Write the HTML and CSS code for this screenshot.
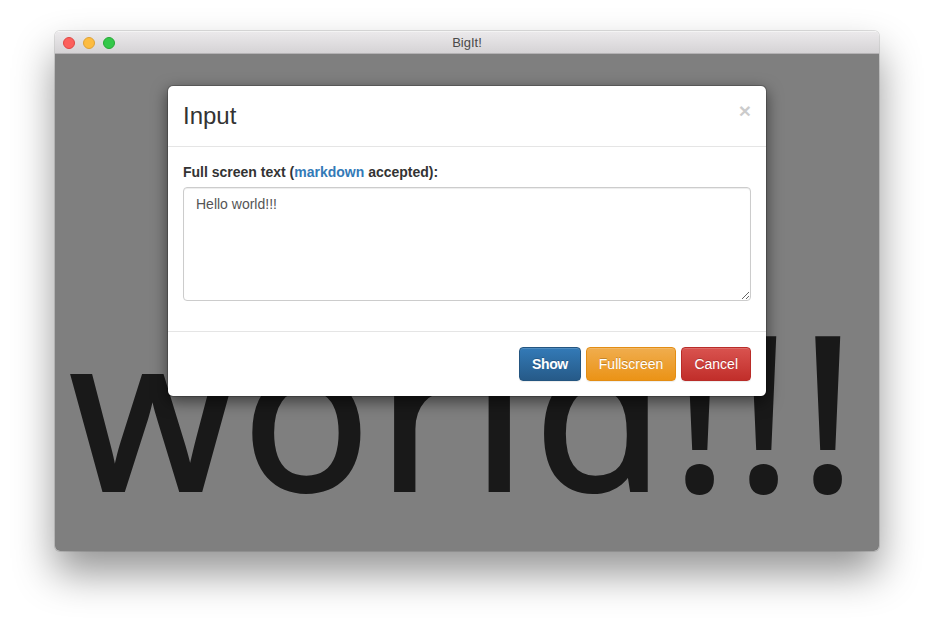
FILE: index.html
```html
<!DOCTYPE html>
<html>
<head>
<meta charset="utf-8">
<title>BigIt!</title>
<link rel="stylesheet" href="styles.css">
</head>
<body>
<div class="window">
  <div class="titlebar">
    <div class="lights">
      <span class="light red"></span>
      <span class="light yellow"></span>
      <span class="light green"></span>
    </div>
    <div class="title">BigIt!</div>
  </div>
  <div class="content">
    <div class="page">
      <div class="big">Hello world!!!</div>
    </div>
    <div class="backdrop"></div>
    <div class="modal-layer">
      <div class="modal">
        <div class="modal-header">
          <button class="close" type="button">&times;</button>
          <h3 class="modal-title">Input</h3>
        </div>
        <div class="modal-body">
          <div class="form-group">
            <label class="label">Full screen text (<a class="link" href="#">markdown</a> accepted):</label>
            <textarea class="form-control" rows="5">Hello world!!!</textarea>
          </div>
        </div>
        <div class="modal-footer">
          <button class="btn btn-primary" type="button">Show</button>
          <button class="btn btn-warning" type="button">Fullscreen</button>
          <button class="btn btn-danger" type="button">Cancel</button>
        </div>
      </div>
    </div>
  </div>
</div>
</body>
</html>
```
FILE: styles.css
```css
* { box-sizing: border-box; }
html, body { margin: 0; padding: 0; background: #fff; }
body { width: 934px; height: 631px; overflow: hidden; padding-top: 31px; font-family: "Liberation Sans", Arial, sans-serif; }

.window {
  margin-left: 55px;
  width: 824px;
  height: 520px;
  border-radius: 5px;
  background: #fff;
  box-shadow: 0 22px 40px rgba(0,0,0,0.42), 0 0 0 1px rgba(0,0,0,0.12);
  display: flex;
  flex-direction: column;
  overflow: hidden;
}

.titlebar {
  height: 23px;
  flex: none;
  display: flex;
  align-items: center;
  position: relative;
  background: linear-gradient(to bottom, #ebe9eb 0%, #d5d3d5 100%);
  border-bottom: 1px solid #b4b2b4;
  border-top: 1px solid #f4f4f4;
}
.lights { display: flex; gap: 8px; padding-left: 8px; }
.light { width: 12px; height: 12px; border-radius: 50%; display: block; }
.red { background: #fc605c; border: 1px solid #df4744; }
.yellow { background: #fdbc40; border: 1px solid #dea236; }
.green { background: #34c84a; border: 1px solid #26a934; }
.title {
  position: absolute;
  left: 0; right: 0; top: 3px;
  text-align: center;
  font-size: 13px;
  color: #4a4a4a;
}

.content {
  flex: 1;
  position: relative;
  overflow: hidden;
  background: #fff;
}
.page { padding: 12px 0 0 0; }
.big {
  font-family: "Open Sans", sans-serif;
  font-weight: 400;
  font-size: 212px;
  line-height: 228px;
  letter-spacing: 8px;
  -webkit-text-stroke: 4px #333;
  color: #333;
  text-align: center;
  white-space: normal;
}
.backdrop { position: absolute; inset: 0; background: rgba(0,0,0,0.5); }
.modal-layer { position: absolute; inset: 0; }
.modal {
  width: 600px;
  margin: 31px auto 0;
  background: #fff;
  border: 1px solid rgba(0,0,0,0.2);
  border-radius: 6px;
  box-shadow: 0 5px 15px rgba(0,0,0,0.5);
  background-clip: padding-box;
  color: #333;
  font-size: 14px;
  line-height: 20px;
}
.modal-header { padding: 15px; border-bottom: 1px solid #e5e5e5; }
.modal-title { margin: 0; font-size: 24px; line-height: 30px; height: 30px; font-weight: 500; color: #333; }
.close {
  float: right;
  margin-top: -1px;
  padding: 0;
  border: 0;
  background: transparent;
  font-family: "Liberation Sans", Arial, sans-serif;
  font-size: 21px;
  font-weight: bold;
  line-height: 1;
  color: #000;
  opacity: 0.2;
  text-shadow: 0 1px 0 #fff;
}
.modal-body { padding: 15px; }
.form-group { margin-bottom: 15px; display: flex; flex-direction: column; }
.label { display: block; font-weight: bold; margin-bottom: 5px; }
.link { color: #337ab7; text-decoration: none; }
.form-control {
  display: block;
  width: 100%;
  height: 114px;
  padding: 6px 12px;
  font-family: "Liberation Sans", Arial, sans-serif;
  font-size: 14px;
  line-height: 20px;
  color: #555;
  background: #fff;
  border: 1px solid #ccc;
  border-radius: 4px;
  box-shadow: inset 0 1px 1px rgba(0,0,0,0.075);
  resize: vertical;
  margin: 0;
}
.modal-footer {
  padding: 15px;
  border-top: 1px solid #e5e5e5;
  display: flex;
  justify-content: flex-end;
  gap: 5px;
}
.btn {
  display: inline-block;
  height: 34px;
  padding: 6px 12px;
  font-family: "Liberation Sans", Arial, sans-serif;
  font-size: 14px;
  line-height: 20px;
  color: #fff;
  border: 1px solid transparent;
  border-radius: 4px;
  text-shadow: 0 -1px 0 rgba(0,0,0,0.2);
  box-shadow: inset 0 1px 0 rgba(255,255,255,0.15), 0 1px 1px rgba(0,0,0,0.075);
  margin: 0;
}
.btn-primary { background: linear-gradient(to bottom, #337ab7 0%, #265a88 100%); border-color: #245580; font-weight: bold; letter-spacing: -0.4px; }
.btn-warning { background: linear-gradient(to bottom, #f0ad4e 0%, #eb9316 100%); border-color: #e38d13; }
.btn-danger { background: linear-gradient(to bottom, #d9534f 0%, #c12e2a 100%); border-color: #b92c28; }
```
